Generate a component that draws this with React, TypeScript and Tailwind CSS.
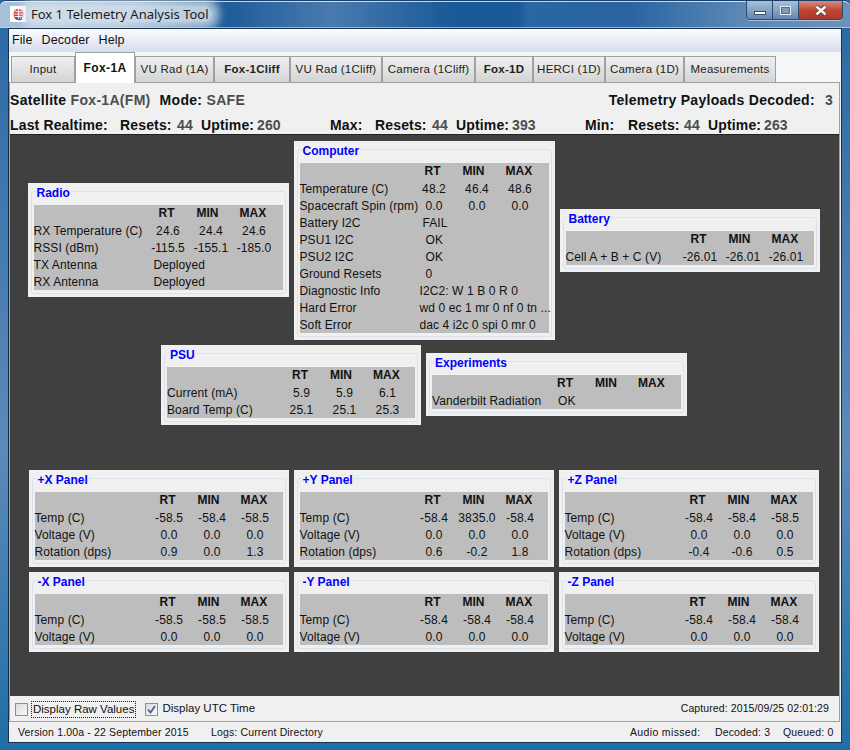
import React from 'react';

// --- Data ---
interface Row {
    label: string;
    values?: string[];
    text?: string;
    textPad?: string;
}

interface PanelProps {
    title: string;
    rows: Row[];
    narrow?: boolean;
}

const radioRows: Row[] = [
    { label: 'RX Temperature (C)', values: ['24.6', '24.4', '24.6'] },
    { label: 'RSSI (dBm)', values: ['-115.5', '-155.1', '-185.0'] },
    { label: 'TX Antenna', text: 'Deployed' },
    { label: 'RX Antenna', text: 'Deployed' },
];

const computerRows: Row[] = [
    { label: 'Temperature (C)', values: ['48.2', '46.4', '48.6'] },
    { label: 'Spacecraft Spin (rpm)', values: ['0.0', '0.0', '0.0'] },
    { label: 'Battery I2C', text: 'FAIL', textPad: 'pl-[3px]' },
    { label: 'PSU1 I2C', text: 'OK', textPad: 'pl-[6px]' },
    { label: 'PSU2 I2C', text: 'OK', textPad: 'pl-[6px]' },
    { label: 'Ground Resets', text: '0', textPad: 'pl-[6px]' },
    { label: 'Diagnostic Info', text: 'I2C2: W 1 B 0 R 0' },
    { label: 'Hard Error', text: 'wd 0 ec 1 mr 0 nf 0 tn ...' },
    { label: 'Soft Error', text: 'dac 4 i2c 0 spi 0 mr 0' },
];

const batteryRows: Row[] = [{ label: 'Cell A + B + C (V)', values: ['-26.01', '-26.01', '-26.01'] }];

const psuRows: Row[] = [
    { label: 'Current (mA)', values: ['5.9', '5.9', '6.1'] },
    { label: 'Board Temp (C)', values: ['25.1', '25.1', '25.3'] },
];

const experimentRows: Row[] = [{ label: 'Vanderbilt Radiation', text: 'OK', textPad: 'pl-[6px]' }];

const panel = (temp: string[], volt: string[], rot?: string[]): Row[] => {
    const rows: Row[] = [
        { label: 'Temp (C)', values: temp },
        { label: 'Voltage (V)', values: volt },
    ];
    if (rot) rows.push({ label: 'Rotation (dps)', values: rot });
    return rows;
};

const zero = ['0.0', '0.0', '0.0'];

const solarPanels: PanelProps[] = [
    { title: '+X Panel', rows: panel(['-58.5', '-58.4', '-58.5'], zero, ['0.9', '0.0', '1.3']) },
    { title: '+Y Panel', rows: panel(['-58.4', '3835.0', '-58.4'], zero, ['0.6', '-0.2', '1.8']) },
    { title: '+Z Panel', rows: panel(['-58.4', '-58.4', '-58.5'], zero, ['-0.4', '-0.6', '0.5']) },
    { title: '-X Panel', rows: panel(['-58.5', '-58.5', '-58.5'], zero) },
    { title: '-Y Panel', rows: panel(['-58.4', '-58.4', '-58.4'], zero) },
    { title: '-Z Panel', rows: panel(['-58.4', '-58.4', '-58.4'], zero) },
];

const tabs = [
    { name: 'Input', w: 'w-[64px]', bold: false },
    { name: 'Fox-1A', w: 'w-[60px]', bold: true, active: true },
    { name: 'VU Rad (1A)', w: 'w-[79px]', bold: false },
    { name: 'Fox-1Cliff', w: 'w-[76px]', bold: true },
    { name: 'VU Rad (1Cliff)', w: 'w-[92px]', bold: false },
    { name: 'Camera (1Cliff)', w: 'w-[93px]', bold: false },
    { name: 'Fox-1D', w: 'w-[58px]', bold: true },
    { name: 'HERCI (1D)', w: 'w-[72px]', bold: false },
    { name: 'Camera (1D)', w: 'w-[79px]', bold: false },
    { name: 'Measurements', w: 'w-[92px]', bold: false },
];

// --- Panels ---
const TelemetryPanel = ({ title, rows, narrow }: PanelProps) => (
    <div className={`${narrow ? 'w-[260px]' : 'w-[261px]'} shrink-0 bg-[#f0f0f0] px-[3px] pt-[8px] pb-[3px]`}>
        <div className="rounded-[3px] border border-[#d9e3ed] px-[2px] pb-[3px]">
            <div className="-mt-[8px] ml-[2px] h-[21px] w-fit">
                <span className="block bg-[#f0f0f0] px-[1px] pt-[1px] text-[12px] font-bold leading-[16px] text-[#0000ff]">{title}</span>
            </div>
            <div className="bg-[#bdbdbd] text-[12px] text-[#111] tracking-[0.1px]">
                <div className="grid h-[17px] grid-cols-[120px_43px_43px_42px] font-bold leading-[17px] tracking-normal">
                    <span />
                    <span className="pl-[5px]">RT</span>
                    <span>MIN</span>
                    <span>MAX</span>
                </div>
                {rows.map((row) => (
                    <div key={row.label} className="grid h-[17px] grid-cols-[120px_43px_43px_42px] whitespace-nowrap leading-[19px]">
                        <span>{row.label}</span>
                        {row.values ? (
                            row.values.map((v, i) => (
                                <span key={i} className="flex w-[29px] justify-center">{v}</span>
                            ))
                        ) : (
                            <span className={`col-span-3 ${row.textPad || ''}`}>{row.text}</span>
                        )}
                    </div>
                ))}
            </div>
        </div>
    </div>
);

// --- Window chrome ---
const WindowButtons = () => (
    <div className="flex h-[19px] overflow-hidden rounded-b-[4px] border border-t-0 border-[#2c4a6e] shadow-[0_1px_0_rgba(255,255,255,0.45)]">
        <div className="flex w-[26px] items-end justify-center border-r border-[#2c4a6e] bg-gradient-to-b from-[#a9c0d8] to-[#6488b0] pb-[4px]">
            <div className="h-[4px] w-[12px] border border-[#3a5070] bg-white" />
        </div>
        <div className="flex w-[26px] items-center justify-center border-r border-[#2c4a6e] bg-gradient-to-b from-[#a9c0d8] to-[#6488b0]">
            <div className="h-[9px] w-[11px] border border-[#e8eef5] bg-[#4a6c96] p-[1px]">
                <div className="h-full w-full bg-[#7d9cc0]" />
            </div>
        </div>
        <div className="flex w-[43px] items-center justify-center bg-gradient-to-b from-[#cf8f86] via-[#c0452f] to-[#a83a2c]">
            <svg width="14" height="11" viewBox="0 0 14 11">
                <path d="M2.5 1 L11.5 10 M11.5 1 L2.5 10" stroke="#4a2a26" strokeWidth="3.6" />
                <path d="M2.5 1.5 L11.5 9.5 M11.5 1.5 L2.5 9.5" stroke="#fff" strokeWidth="2.4" />
            </svg>
        </div>
    </div>
);

const AppIcon = () => (
    <div className="flex h-[16px] w-[16px] items-center justify-center bg-white">
        <svg width="13" height="13" viewBox="0 0 13 13">
            <circle cx="6.5" cy="6" r="5" fill="#d8242c" />
            <path d="M1.5 6h10M6.5 1v10M3 3.5h7M3 8.5h7" stroke="#fff" strokeWidth="0.9" />
            <path d="M3 9.5 Q6 13 10 10.5" fill="none" stroke="#2a3a90" strokeWidth="1.6" />
        </svg>
    </div>
);

const Checkbox = ({ checked }: { checked?: boolean }) => (
    <div className="flex h-[13px] w-[13px] shrink-0 items-center justify-center border border-[#8e8f8f] bg-gradient-to-br from-[#dcdcdc] to-[#f8f8f8]">
        {checked && (
            <svg width="9" height="9" viewBox="0 0 9 9">
                <path d="M1 4.5 L3.5 7.5 L8 1" fill="none" stroke="#4a5f97" strokeWidth="1.8" />
            </svg>
        )}
    </div>
);

const Num = ({ children, w }: { children: React.ReactNode; w: string }) => (
    <span className={`${w} text-[#4c4c4c]`}>{children}</span>
);

const Stat = ({ label, w, children }: { label: string; w: string; children: React.ReactNode }) => (
    <>
        <span className={`${w} text-[#101010]`}>{label}</span>
        {children}
    </>
);

const App: React.FC = () => {
    return (
        <div
            className="flex h-[750px] w-[850px] flex-col overflow-hidden bg-[linear-gradient(180deg,#2a68a4_0%,#5d8ab8_60%,#1f6ea6_100%)] px-[8px] pb-[7px]"
            style={{ fontFamily: '"Liberation Sans", Arial, sans-serif' }}
        >
            {/* title bar */}
            <div className="-mx-[8px] flex h-[28px] shrink-0 items-start justify-between rounded-t-[6px] border-t border-[#1a3f68] bg-[linear-gradient(90deg,#a9c1d8_0%,#8fb0cf_15%,#1c5a98_26%,#4a7aae_39%,#1a5a98_53%,#1a5a98_61%,#2a66a4_62%,#2a64a2_74%,#5b88b5_87%,#6a93bc_100%)] pr-[7px] shadow-[inset_0_1px_0_rgba(255,255,255,0.75),inset_0_-1px_0_rgba(190,215,240,0.7)]">
                <div className="flex items-center gap-[2px] pl-[10px] pt-[5px]">
                    <AppIcon />
                    <span
                        className="rounded-[6px] bg-[#dbe5ee]/80 px-[3px] text-[13px] leading-[16px] text-[#1c1c1c] shadow-[0_0_10px_7px_rgba(219,229,238,0.75)]"
                        style={{ fontFamily: '"Noto Sans", sans-serif' }}
                    >
                        Fox 1 Telemetry Analysis Tool
                    </span>
                </div>
                <WindowButtons />
            </div>

            {/* client area */}
            <div className="flex min-h-0 flex-1 flex-col border border-[#16324f] bg-[#f0f0f0] text-[#111]">
                <div className="flex h-[23px] shrink-0 items-center gap-[9px] bg-gradient-to-b from-[#fbfcfe] to-[#d5dcec] pb-[1px] pl-[3px] text-[12.5px] tracking-[0.1px]">
                    <span>File</span>
                    <span>Decoder</span>
                    <span>Help</span>
                </div>

                {/* tabs */}
                <div className="flex h-[30px] shrink-0 items-end bg-[#f5f6f7] pl-[2px]">
                    {tabs.map((t) =>
                        t.active ? (
                            <div key={t.name} className={`${t.w} relative z-10 -mb-[1px] flex h-[31px] items-center justify-center border border-b-0 border-[#a0a0a0] bg-white text-[12px] font-bold tracking-[0.4px] text-[#111]`}>
                                {t.name}
                            </div>
                        ) : (
                            <div key={t.name} className={`${t.w} flex h-[26px] items-center justify-center border border-b-0 border-[#a0a0a0] bg-gradient-to-b from-[#f0f0f0] to-[#d4d4d4] text-[11.5px] tracking-[0.25px] text-[#222] ${t.bold ? 'font-bold' : ''}`}>
                                {t.name}
                            </div>
                        ),
                    )}
                </div>

                {/* tab pane */}
                <div className="mr-[1px] flex min-h-0 flex-1 flex-col border border-[#a0a0a0] bg-[#f0f0f0]">
                    <div className="h-[51px] shrink-0 font-bold leading-[16px]">
                        <div className="flex h-[26px] items-end justify-between pb-[1px] pr-[6px] text-[14px] tracking-[0.3px]">
                            <div>
                                <span>Satellite </span>
                                <span className="text-[#4c4c4c]">Fox-1A(FM)</span>
                                <span className="ml-[9px]">Mode: </span>
                                <span className="text-[#4c4c4c]">SAFE</span>
                            </div>
                            <div>
                                <span>Telemetry Payloads Decoded:</span>
                                <span className="ml-[10px] text-[#4c4c4c]">3</span>
                            </div>
                        </div>
                        <div className="mt-[8px] flex text-[14px] tracking-[0.15px]">
                            <Stat label="Last Realtime:" w="w-[110px]"><span /></Stat>
                            <Stat label="Resets:" w="w-[57px]"><Num w="w-[24px]">44</Num></Stat>
                            <Stat label="Uptime:" w="w-[56px]"><Num w="w-[73px]">260</Num></Stat>
                            <Stat label="Max:" w="w-[45px]"><span /></Stat>
                            <Stat label="Resets:" w="w-[57px]"><Num w="w-[24px]">44</Num></Stat>
                            <Stat label="Uptime:" w="w-[56px]"><Num w="w-[73px]">393</Num></Stat>
                            <Stat label="Min:" w="w-[43px]"><span /></Stat>
                            <Stat label="Resets:" w="w-[56px]"><Num w="w-[24px]">44</Num></Stat>
                            <Stat label="Uptime:" w="w-[56px]"><Num w="w-[30px]">263</Num></Stat>
                        </div>
                    </div>

                    {/* telemetry canvas */}
                    <div className="flex min-h-0 flex-1 flex-col items-center border-t border-[#222] bg-[#404040]">
                        <div className="mt-[6px] mr-[2px] flex h-[199px] items-center gap-[5px]">
                            <div className="mb-[1px]"><TelemetryPanel title="Radio" rows={radioRows} /></div>
                            <TelemetryPanel title="Computer" rows={computerRows} />
                            <TelemetryPanel title="Battery" rows={batteryRows} narrow />
                        </div>
                        <div className="mt-[5px] mr-[1px] flex h-[80px] items-center gap-[5px]">
                            <TelemetryPanel title="PSU" rows={psuRows} narrow />
                            <div className="mb-[2px]"><TelemetryPanel title="Experiments" rows={experimentRows} /></div>
                        </div>
                        <div className="mt-[45px] mr-[2px] grid grid-cols-[260px_260px_260px] gap-[5px]">
                            {solarPanels.map((p) => (
                                <TelemetryPanel key={p.title} title={p.title} rows={p.rows} narrow />
                            ))}
                        </div>
                    </div>

                    <div className="flex h-[25px] shrink-0 items-center justify-between bg-[#f0f0f0] pt-[1px] pl-[5px] pr-[10px]">
                        <div className="flex items-center whitespace-nowrap text-[11.5px]">
                            <Checkbox />
                            <span className="ml-[3px] border border-dotted border-[#222] px-[1px] leading-[15px]">Display Raw Values</span>
                            <span className="ml-[9px]"><Checkbox checked /></span>
                            <span className="ml-[4px]">Display UTC Time</span>
                        </div>
                        <span className="text-[10.5px] tracking-[0.1px]">Captured: 2015/09/25 02:01:29</span>
                    </div>
                </div>

                {/* status bar */}
                <div className="flex h-[20px] shrink-0 items-center pt-[2px] pl-[9px] text-[10.5px] tracking-[0.15px]">
                    <span className="w-[193px]">Version 1.00a - 22 September 2015</span>
                    <span className="w-[419px]">Logs: Current Directory</span>
                    <span className="w-[85px] tracking-[0.35px]">Audio missed:</span>
                    <span className="w-[68px]">Decoded: 3</span>
                    <span>Queued: 0</span>
                </div>
            </div>
        </div>
    );
};

export default App;
